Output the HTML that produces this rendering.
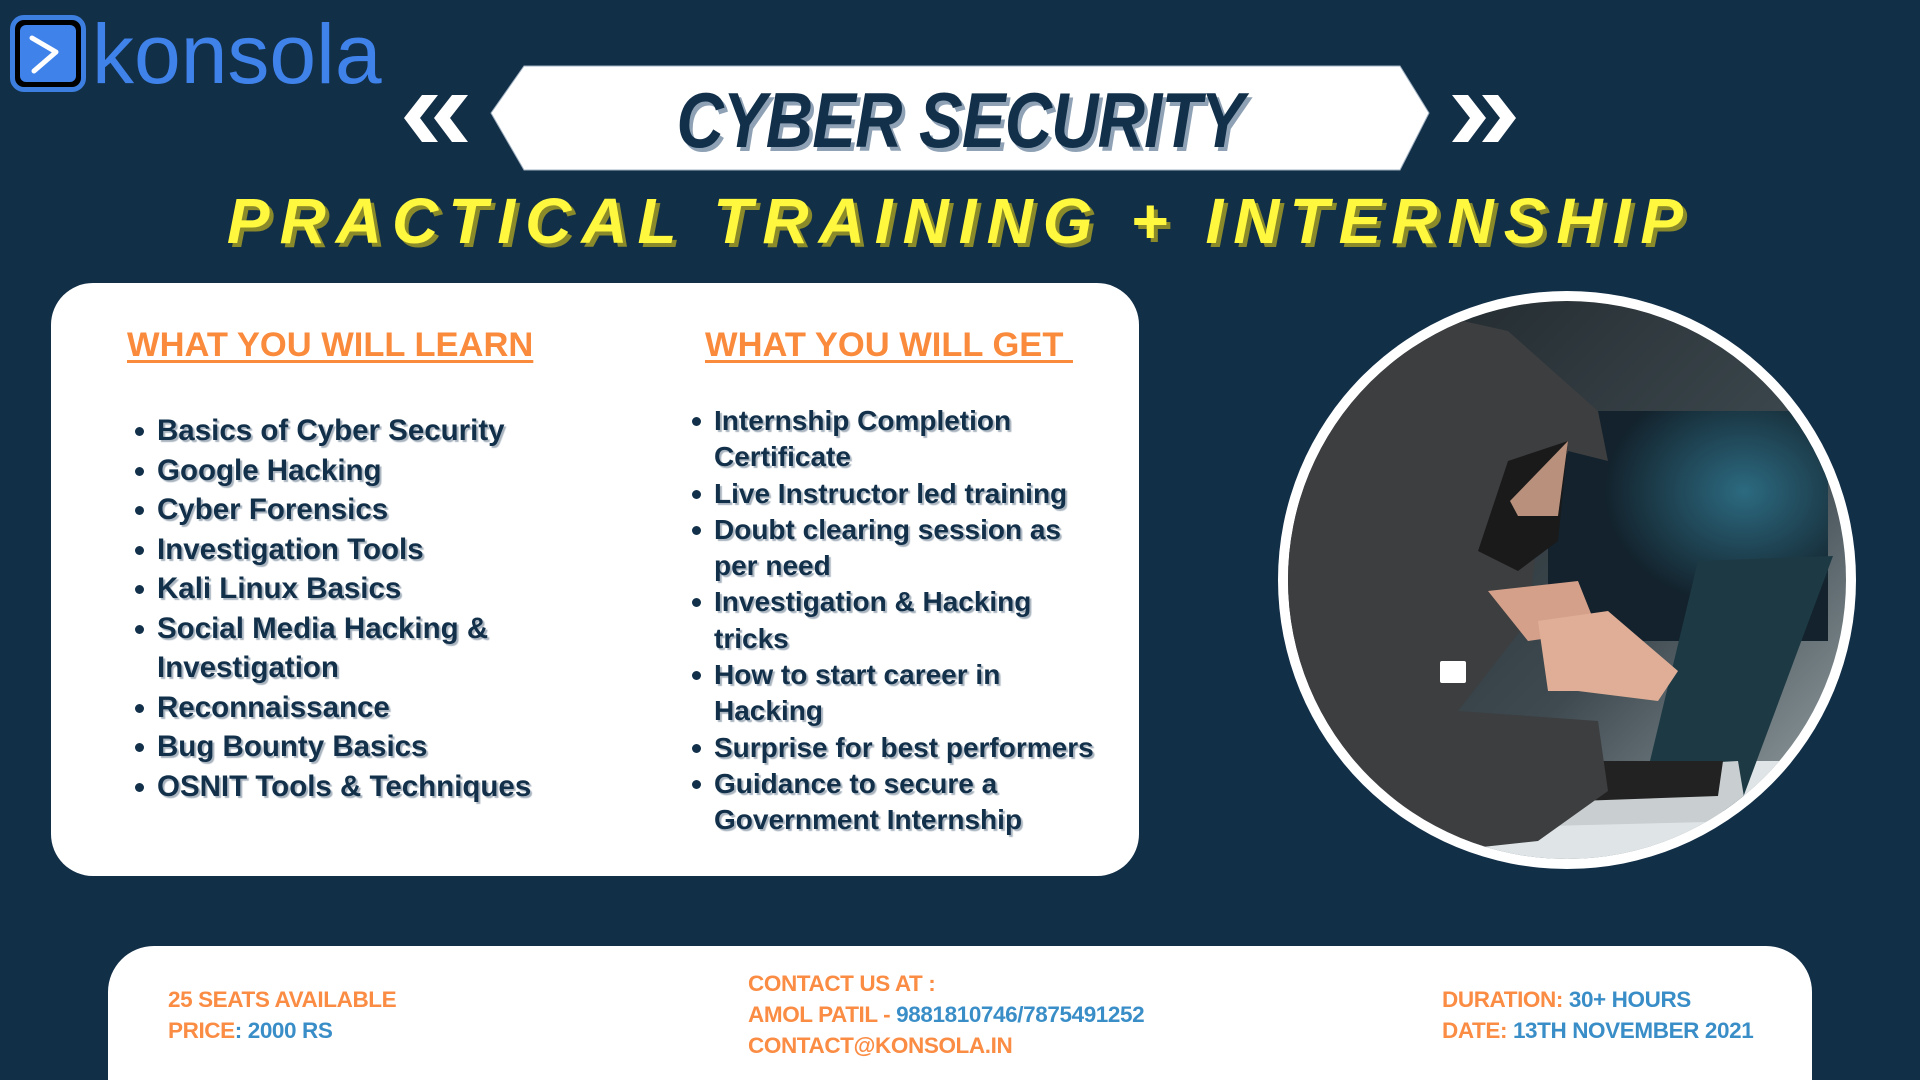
<!DOCTYPE html>
<html><head><meta charset="utf-8"><style>
*{margin:0;padding:0;box-sizing:border-box}
html,body{width:1920px;height:1080px;overflow:hidden}
body{background:#122f48;font-family:"Liberation Sans",sans-serif;position:relative}
.abs{position:absolute}
.logo-icon{left:10px;top:15px;width:76px;height:77px;border:5px solid #3d7fe0;border-radius:14px;background:#000}
.logo-icon div{position:absolute;left:5px;top:5px;right:5px;bottom:5px;background:#3f82ea;border-radius:6px}
.logo-text{left:92px;top:4px;font-size:84px;color:#3f82ea;letter-spacing:0px;line-height:100px}
.title{left:560px;top:80px;width:800px;text-align:center;font-size:78px;font-weight:bold;font-style:italic;color:#12304a;text-shadow:4px 4px 0 #8fa2b5;transform:scaleX(0.84);letter-spacing:-1px;line-height:80px;white-space:nowrap}
.sub{left:160px;top:183px;width:1600px;text-align:center;font-size:64px;font-weight:bold;font-style:italic;color:#fff83e;letter-spacing:10px;text-shadow:4px 4px 0 #8a8a2a;line-height:76px;white-space:nowrap}
.card{left:51px;top:283px;width:1088px;height:593px;background:#fff;border-radius:42px}
.h{font-size:34.5px;font-weight:bold;color:#fa8a3c;text-decoration:underline;text-decoration-thickness:3px;text-underline-offset:4px;line-height:40px}
ul{list-style:none}
li{position:relative;font-weight:bold;color:#12304a;text-shadow:2px 2px 1px #a9b4bf;white-space:nowrap}
li:before{content:"";position:absolute;left:-22px;width:9px;height:9px;border-radius:50%;background:#12304a}
.l li{font-size:29.5px;line-height:39.5px}
.l li:before{top:16px}
.r li{font-size:28px;line-height:36.3px}
.r li:before{top:14px}
.foot{left:108px;top:946px;width:1704px;height:134px;background:#fff;border-radius:46px 46px 0 0}
.f{font-size:22.5px;font-weight:bold;color:#fa8c44;letter-spacing:-0.4px;line-height:31px}
.f b{color:#3a8ec8}
</style></head><body>
<div class="abs logo-icon"><div></div>
<svg class="abs" style="left:5px;top:5px" width="56" height="57" viewBox="0 0 56 57"><path d="M12 13 L36 27 L14 46" fill="none" stroke="#fff" stroke-width="5" stroke-linecap="round" stroke-linejoin="round"/></svg></div>
<div class="abs logo-text">konsola</div>

<svg class="abs" style="left:400px;top:60px" width="1130" height="120" viewBox="0 0 1130 120">
<polygon points="124,6 1000,6 1029,53 1000,110 124,110 91,53" fill="#fff" stroke="#9fb0c0" stroke-width="1"/>
<polygon points="2,35 18,35 0,58 18,82 2,82 -16,58" transform="translate(20,0)" fill="#fff"/>
<polygon points="2,35 18,35 0,58 18,82 2,82 -16,58" transform="translate(50,0)" fill="#fff"/>
<polygon points="0,35 16,35 34,58 16,82 0,82 18,58" transform="translate(1052,0)" fill="#fff"/>
<polygon points="0,35 16,35 34,58 16,82 0,82 18,58" transform="translate(1082,0)" fill="#fff"/>
</svg>
<div class="abs title">CYBER SECURITY</div>
<div class="abs sub">PRACTICAL TRAINING + INTERNSHIP</div>

<div class="abs card"></div>
<div class="abs h" style="left:127px;top:325px">WHAT YOU WILL LEARN</div>
<div class="abs h" style="left:705px;top:325px;white-space:pre">WHAT YOU WILL GET </div>
<ul class="abs l" style="left:157px;top:411px">
<li>Basics of Cyber Security</li><li>Google Hacking</li><li>Cyber Forensics</li><li>Investigation Tools</li><li>Kali Linux Basics</li><li>Social Media Hacking &amp;<br>Investigation</li><li>Reconnaissance</li><li>Bug Bounty Basics</li><li>OSNIT Tools &amp; Techniques</li>
</ul>
<ul class="abs r" style="left:714px;top:403px">
<li>Internship Completion<br>Certificate</li><li>Live Instructor led training</li><li>Doubt clearing session as<br>per need</li><li>Investigation &amp; Hacking<br>tricks</li><li>How to start career in<br>Hacking</li><li>Surprise for best performers</li><li>Guidance to secure a<br>Government Internship</li>
</ul>

<svg class="abs" style="left:1278px;top:291px" width="578" height="578" viewBox="0 0 578 578">
<defs>
<clipPath id="c"><circle cx="289" cy="289" r="279"/></clipPath>
<radialGradient id="mon" cx="0.7" cy="0.35" r="0.5"><stop offset="0" stop-color="#2c6a80"/><stop offset="1" stop-color="#13222c"/></radialGradient>
<linearGradient id="bg" x1="0" y1="0" x2="1" y2="1"><stop offset="0" stop-color="#1b2226"/><stop offset="0.6" stop-color="#3e4a50"/><stop offset="1" stop-color="#a8b2b6"/></linearGradient>
</defs>
<circle cx="289" cy="289" r="289" fill="#fff"/>
<g clip-path="url(#c)">
<rect width="578" height="578" fill="url(#bg)"/>
<rect x="270" y="120" width="280" height="230" fill="url(#mon)"/>
<rect x="0" y="470" width="578" height="120" fill="#dfe4e6"/>
<polygon points="420,270 555,265 460,520 360,520" fill="#1d3a44"/>
<polygon points="280,480 460,470 470,530 270,535" fill="#c9ced0"/>
<polygon points="300,470 445,470 440,505 300,510" fill="#222"/>
<path d="M0,60 L140,20 L230,40 L320,120 L330,170 L290,160 L260,240 L250,330 L180,420 L320,430 L330,500 L260,550 L0,578 Z" fill="#3d3e40"/>
<path d="M230,170 L290,150 L280,250 L240,280 L200,260 Z" fill="#1a1a1a"/>
<path d="M232,210 L290,150 L280,225 L240,225 Z" fill="#b8907c"/>
<path d="M210,300 L300,290 L320,340 L250,350 Z" fill="#d4a08a"/>
<path d="M260,330 L330,320 L400,380 L380,410 L300,400 L270,400 Z" fill="#e0ae96"/>
<rect x="162" y="370" width="26" height="22" rx="2" fill="#fff"/>
</g>
</svg>

<div class="abs foot"></div>
<div class="abs f" style="left:168px;top:984px">25 SEATS AVAILABLE<br>PRICE<b>: 2000 RS</b></div>
<div class="abs f" style="left:748px;top:968px">CONTACT US AT :<br>AMOL PATIL - <b>9881810746/7875491252</b><br>CONTACT@KONSOLA.IN</div>
<div class="abs f" style="left:1442px;top:984px">DURATION: <b>30+ HOURS</b><br>DATE: <b>13TH NOVEMBER 2021</b></div>
</body></html>
